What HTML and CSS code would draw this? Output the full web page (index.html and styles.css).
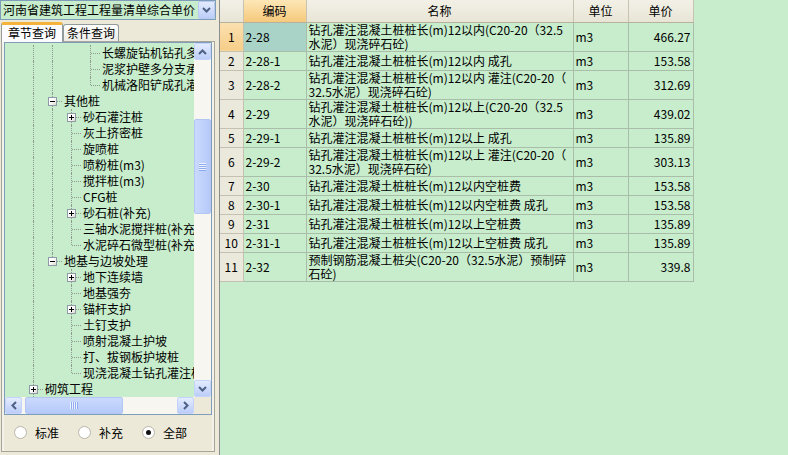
FILE: index.html
```html
<!DOCTYPE html>
<html lang="zh-CN">
<head>
<meta charset="UTF-8">
<title>清单综合单价</title>
<link rel="stylesheet" href="styles.css">
</head>
<body>
<div class="app">

  <!-- ─── left: chapter tree ─────────────────────────────────────────── -->
  <aside class="side">
    <div class="combo">
      <span class="combo-text">河南省建筑工程工程量清单综合单价</span>
      <span class="sbtn combo-btn"><svg width="9" height="6" viewBox="0 0 9 6"><path d="M1 1l3.5 3.5L8 1" /></svg></span>
    </div>

    <div class="tabs">
      <span class="tab active">章节查询</span>
      <span class="tab">条件查询</span>
    </div>

    <div class="pane">
      <div class="tree-box">
        <div class="tree-view">
          <div class="tree">
            <div class="row"><i class="g"></i><i class="g v"></i><i class="g v"></i><i class="g"></i><i class="g t"></i><span class="label">长螺旋钻机钻孔多分支桩</span></div>
            <div class="row"><i class="g"></i><i class="g v"></i><i class="g v"></i><i class="g"></i><i class="g t"></i><span class="label">泥浆护壁多分支承力盘桩</span></div>
            <div class="row"><i class="g"></i><i class="g v"></i><i class="g v"></i><i class="g"></i><i class="g l"></i><span class="label">机械洛阳铲成孔灌注桩</span></div>
            <div class="row"><i class="g"></i><i class="g v"></i><i class="g t"><b class="box minus"></b></i><span class="label">其他桩</span></div>
            <div class="row"><i class="g"></i><i class="g v"></i><i class="g v"></i><i class="g t"><b class="box"></b></i><span class="label">砂石灌注桩</span></div>
            <div class="row"><i class="g"></i><i class="g v"></i><i class="g v"></i><i class="g t"></i><span class="label">灰土挤密桩</span></div>
            <div class="row"><i class="g"></i><i class="g v"></i><i class="g v"></i><i class="g t"></i><span class="label">旋喷桩</span></div>
            <div class="row"><i class="g"></i><i class="g v"></i><i class="g v"></i><i class="g t"></i><span class="label">喷粉桩(m3)</span></div>
            <div class="row"><i class="g"></i><i class="g v"></i><i class="g v"></i><i class="g t"></i><span class="label">搅拌桩(m3)</span></div>
            <div class="row"><i class="g"></i><i class="g v"></i><i class="g v"></i><i class="g t"></i><span class="label">CFG桩</span></div>
            <div class="row"><i class="g"></i><i class="g v"></i><i class="g v"></i><i class="g t"><b class="box"></b></i><span class="label">砂石桩(补充)</span></div>
            <div class="row"><i class="g"></i><i class="g v"></i><i class="g v"></i><i class="g t"></i><span class="label">三轴水泥搅拌桩(补充)</span></div>
            <div class="row"><i class="g"></i><i class="g v"></i><i class="g v"></i><i class="g l"></i><span class="label">水泥碎石微型桩(补充)</span></div>
            <div class="row"><i class="g"></i><i class="g v"></i><i class="g l"><b class="box minus"></b></i><span class="label">地基与边坡处理</span></div>
            <div class="row"><i class="g"></i><i class="g v"></i><i class="g"></i><i class="g t"><b class="box"></b></i><span class="label">地下连续墙</span></div>
            <div class="row"><i class="g"></i><i class="g v"></i><i class="g"></i><i class="g t"></i><span class="label">地基强夯</span></div>
            <div class="row"><i class="g"></i><i class="g v"></i><i class="g"></i><i class="g t"><b class="box"></b></i><span class="label">锚杆支护</span></div>
            <div class="row"><i class="g"></i><i class="g v"></i><i class="g"></i><i class="g t"></i><span class="label">土钉支护</span></div>
            <div class="row"><i class="g"></i><i class="g v"></i><i class="g"></i><i class="g t"></i><span class="label">喷射混凝土护坡</span></div>
            <div class="row"><i class="g"></i><i class="g v"></i><i class="g"></i><i class="g t"></i><span class="label">打、拔钢板护坡桩</span></div>
            <div class="row"><i class="g"></i><i class="g v"></i><i class="g"></i><i class="g l"></i><span class="label">现浇混凝土钻孔灌注桩</span></div>
            <div class="row"><i class="g"></i><i class="g t"><b class="box"></b></i><span class="label">砌筑工程</span></div>
          </div>

          <!-- vertical scrollbar -->
          <div class="vscroll">
            <span class="sbtn"><svg width="9" height="6" viewBox="0 0 9 6"><path d="M1 5l3.5-3.5L8 5" /></svg></span>
            <span class="thumb vthumb"><span class="grip"></span></span>
            <span class="track"></span>
            <span class="sbtn"><svg width="9" height="6" viewBox="0 0 9 6"><path d="M1 1l3.5 3.5L8 1" /></svg></span>
          </div>
        </div>

        <!-- horizontal scrollbar -->
        <div class="hbar">
          <div class="hscroll">
            <span class="sbtn"><svg width="6" height="9" viewBox="0 0 6 9"><path d="M5 1L1.5 4.5 5 8" /></svg></span>
            <span class="thumb hthumb"><span class="grip"></span></span>
            <span class="track"></span>
            <span class="sbtn"><svg width="6" height="9" viewBox="0 0 6 9"><path d="M1 1l3.5 3.5L1 8" /></svg></span>
          </div>
          <div class="corner"></div>
        </div>
      </div>

      <div class="radios">
        <label class="radio"><span class="dot"></span>标准</label>
        <label class="radio"><span class="dot"></span>补充</label>
        <label class="radio"><span class="dot on"></span>全部</label>
      </div>
    </div>
  </aside>

  <!-- ─── right: price grid ──────────────────────────────────────────── -->
  <main class="grid-panel">
    <table class="grid">
      <colgroup>
        <col class="c-no"><col class="c-code"><col class="c-name"><col class="c-unit"><col class="c-price">
      </colgroup>
      <thead>
        <tr><th></th><th class="sorted">编码</th><th>名称</th><th>单位</th><th>单价</th></tr>
      </thead>
      <tbody>
        <tr class="tall cur"><td class="no">1</td><td class="sel">2-28</td><td>钻孔灌注混凝土桩桩长(m)12以内(C20-20（32.5<br>水泥）现浇碎石砼)</td><td>m3</td><td class="num">466.27</td></tr>
        <tr><td class="no">2</td><td>2-28-1</td><td>钻孔灌注混凝土桩桩长(m)12以内 成孔</td><td>m3</td><td class="num">153.58</td></tr>
        <tr class="tall"><td class="no">3</td><td>2-28-2</td><td>钻孔灌注混凝土桩桩长(m)12以内 灌注(C20-20（<br>32.5水泥）现浇碎石砼)</td><td>m3</td><td class="num">312.69</td></tr>
        <tr class="tall"><td class="no">4</td><td>2-29</td><td>钻孔灌注混凝土桩桩长(m)12以上(C20-20（32.5<br>水泥）现浇碎石砼))</td><td>m3</td><td class="num">439.02</td></tr>
        <tr><td class="no">5</td><td>2-29-1</td><td>钻孔灌注混凝土桩桩长(m)12以上 成孔</td><td>m3</td><td class="num">135.89</td></tr>
        <tr class="tall"><td class="no">6</td><td>2-29-2</td><td>钻孔灌注混凝土桩桩长(m)12以上 灌注(C20-20（<br>32.5水泥）现浇碎石砼)</td><td>m3</td><td class="num">303.13</td></tr>
        <tr><td class="no">7</td><td>2-30</td><td>钻孔灌注混凝土桩桩长(m)12以内空桩费</td><td>m3</td><td class="num">153.58</td></tr>
        <tr><td class="no">8</td><td>2-30-1</td><td>钻孔灌注混凝土桩桩长(m)12以内空桩费 成孔</td><td>m3</td><td class="num">153.58</td></tr>
        <tr><td class="no">9</td><td>2-31</td><td>钻孔灌注混凝土桩桩长(m)12以上空桩费</td><td>m3</td><td class="num">135.89</td></tr>
        <tr><td class="no">10</td><td>2-31-1</td><td>钻孔灌注混凝土桩桩长(m)12以上空桩费 成孔</td><td>m3</td><td class="num">135.89</td></tr>
        <tr class="tall"><td class="no">11</td><td>2-32</td><td>预制钢筋混凝土桩尖(C20-20（32.5水泥）预制碎<br>石砼)</td><td>m3</td><td class="num">339.8</td></tr>
      </tbody>
    </table>
  </main>

</div>
</body>
</html>
```

FILE: styles.css
```css
:root{
  --eye: #c7edcc;        /* green grid / tree background */
  --xp: #ece9d8;         /* window face */
  --grid-line: #a9bda9;
  --tree-line: #8f9a8f;
}
*{ box-sizing:border-box; }

body{
  margin:0;
  font:12px/16px "Noto Sans CJK SC", "Liberation Sans", sans-serif;
  color:#000;
  background:var(--xp);
}

.app{
  display:flex;
  width:788px; height:455px;
  overflow:hidden;
}

/* ---------- left column ---------- */
.side{
  width:216px; flex:none;
  display:flex; flex-direction:column;
  background:var(--xp);
}

.combo{
  height:20px;
  display:flex;
  border:1px solid #7f9db9;
  background:var(--eye);
}
.combo-text{
  flex:1;
  padding-left:2px;
  line-height:18px;
  white-space:nowrap; overflow:hidden;
}

/* xp blue scroll / drop buttons */
.sbtn{
  width:17px; height:17px; flex:none;
  display:flex; align-items:center; justify-content:center;
  border:1px solid #c4d3f9;
  border-radius:2px;
  background:linear-gradient(#e3ebfe, #bccdf8);
}
.sbtn path{ fill:none; stroke:#4d6185; stroke-width:2; }
.combo-btn{ height:18px; border-color:#b7c8f2; }

.tabs{
  display:flex; align-items:flex-end;
  height:20px;
  margin-top:1px;
  padding-left:1px;
}
.tab{
  height:17px;
  padding:0 3px;
  border:1px solid #919b9c; border-bottom:none;
  border-radius:3px 3px 0 0;
  background:linear-gradient(#fff, #ecebe6);
  line-height:16px;
}
.tab.active{
  height:20px;
  padding:0 6px;
  border-top:3px solid #f6b33b;
  background:#fcfcfe;
  line-height:15px;
  margin-bottom:-1px;
  position:relative;
}

.pane{
  flex:1;
  width:214px;
  margin:0 0 3px 1px;
  padding:0 2px;
  border:1px solid #a7a59a;
  background:#f2f1ea;
  display:flex; flex-direction:column;
}

.tree-box{
  height:373px;
  border:1px solid #7f9db9;
  display:flex; flex-direction:column;
}
.tree-view{ height:354px; display:flex; }

.tree{
  flex:1;
  background:var(--eye);
  overflow:hidden;
  padding-top:2px;
}
.row{
  height:16px;
  display:flex; align-items:center;
  white-space:nowrap;
}
.label{ margin-left:2px; line-height:16px; }

/* tree guides: one 19px column per level */
.g{
  width:19px; height:16px; flex:none;
  position:relative;
}
.g.v::before,
.g.t::before,
.g.l::before{
  content:""; position:absolute;
  left:9px; top:0; bottom:0;
  border-left:1px dotted var(--tree-line);
}
.g.l::before{ bottom:8px; }
.g.t::after,
.g.l::after{
  content:""; position:absolute;
  left:10px; right:0; top:8px;
  border-top:1px dotted var(--tree-line);
}
.box{
  position:absolute;
  left:5px; top:4px;
  width:9px; height:9px;
  border:1px solid #8e9aa8;
  background:linear-gradient(135deg, #fff 40%, #dcdad0);
  z-index:1;
}
.box::before,
.box::after{
  content:""; position:absolute;
  background:#000;
}
.box::before{ left:1px; top:3px; width:5px; height:1px; }
.box::after{ left:3px; top:1px; width:1px; height:5px; }
.box.minus::after{ display:none; }

/* scrollbars */
.vscroll{
  width:17px;
  display:flex; flex-direction:column;
  background:#f7f6f1;
}
.track{ flex:1; }
.thumb{
  display:flex; align-items:center; justify-content:center;
  border:1px solid #b2c5f3;
  border-radius:2px;
  background:linear-gradient(to right, #cad9fd, #b6caf8);
}
.vthumb{ height:95px; margin-top:59px; }
.hthumb{ width:98px; margin-left:3px; background:linear-gradient(#cad9fd, #b6caf8); }
.grip{
  width:7px; height:8px;
  background:repeating-linear-gradient(#eef3ff 0 1px, #8eaaf0 1px 2px);
}
.hthumb .grip{
  width:8px; height:7px;
  background:repeating-linear-gradient(to right, #eef3ff 0 1px, #8eaaf0 1px 2px);
}
.hbar{ height:17px; display:flex; }
.hscroll{
  flex:1;
  display:flex;
  background:#f7f6f1;
}
.corner{ width:17px; background:var(--xp); }

/* radio row */
.radios{
  flex:1;
  display:flex; align-items:center;
  padding:0 0 1px 10px;
  background:var(--xp);
}
.radio{ display:flex; align-items:center; }
.radio + .radio{ margin-left:19px; }
.dot{
  width:13px; height:13px;
  margin-right:8px;
  border:1px solid #b9b6aa;
  border-radius:50%;
  background:#fff;
  display:flex; align-items:center; justify-content:center;
}
.dot.on::after{
  content:""; width:5px; height:5px;
  border-radius:50%;
  background:#111;
}

/* ---------- right: grid ---------- */
.grid-panel{
  flex:1;
  margin-left:3px;
  border-left:1px solid #8d8d8d;
  background:var(--eye);
}
.grid{
  border-collapse:collapse;
  table-layout:fixed;
  width:473px;
}
.c-no{ width:23px; }
.c-code{ width:63px; }
.c-name{ width:267px; }
.c-unit{ width:55px; }
.c-price{ width:65px; }

.grid th{
  height:22px;
  padding:0;
  font-weight:normal;
  line-height:16px;
  background:linear-gradient(#f3f1e7, #e8e5d6);
  border-right:1px solid #c8c4b2;
  border-bottom:1px solid #b6b29e;
}
.grid th.sorted{ background:linear-gradient(#fde6b6, #f6c97c); }

.grid td{
  height:19px;
  padding:0 2px;
  line-height:14px;
  vertical-align:middle;
  white-space:nowrap;
  border-right:1px solid var(--grid-line);
  border-bottom:1px solid var(--grid-line);
}
.grid tr.tall td{ height:29px; }
.grid td.no{
  text-align:center;
  padding:0;
  background:#ebe9dc;
  border-right-color:#c4c1b0;
  border-bottom-color:#c4c1b0;
}
.grid tr.cur td.no{ background:linear-gradient(#fbe1b0, #f5cd88); }
.grid td.sel{ background:#a9d3c7; }
.grid td.num{ text-align:right; }
```
